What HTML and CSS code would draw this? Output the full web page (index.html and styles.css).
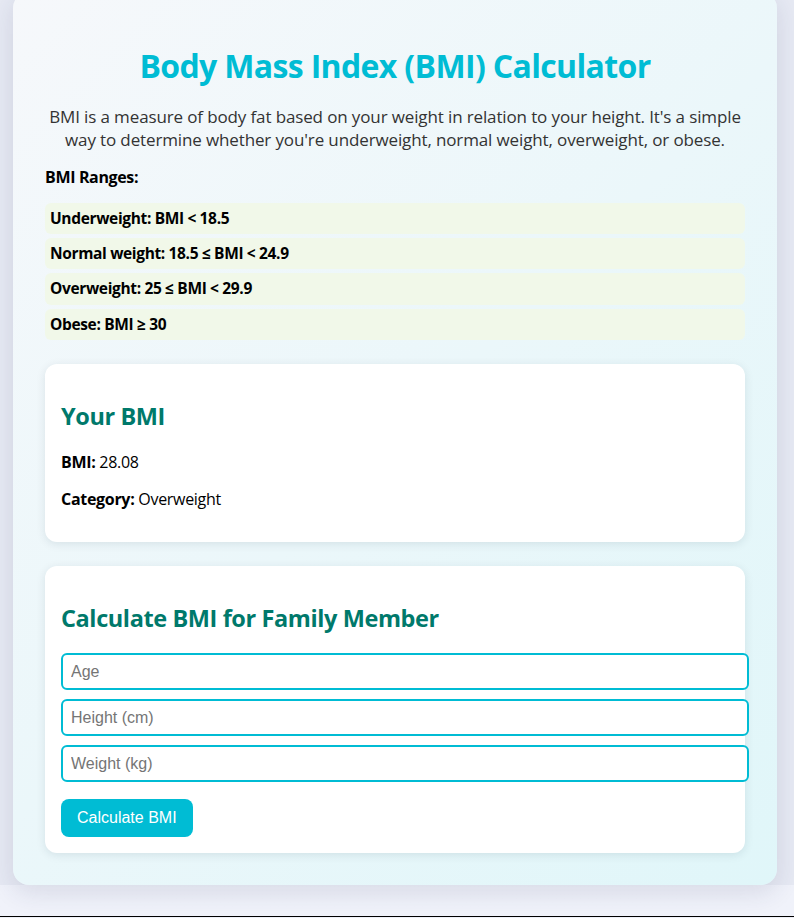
FILE: index.html
```html
<!DOCTYPE html>
<html lang="en">
<head>
<meta charset="utf-8">
<title>BMI Calculator</title>
<link rel="stylesheet" href="styles.css">
</head>
<body>
<div class="page">
  <div class="container">
    <h1 class="title">Body Mass Index (BMI) Calculator</h1>
    <p class="intro">BMI is a measure of body fat based on your weight in relation to your height. It's a simple way to determine whether you're underweight, normal weight, overweight, or obese.</p>
    <p class="ranges-label">BMI Ranges:</p>
    <ul class="ranges">
      <li>Underweight: BMI &lt; 18.5</li>
      <li>Normal weight: 18.5 ≤ BMI &lt; 24.9</li>
      <li>Overweight: 25 ≤ BMI &lt; 29.9</li>
      <li>Obese: BMI ≥ 30</li>
    </ul>
    <div class="card">
      <h2 class="card-title">Your BMI</h2>
      <p class="card-line"><strong>BMI:</strong> 28.08</p>
      <p class="card-line"><strong>Category:</strong> Overweight</p>
    </div>
    <div class="card card-form">
      <h2 class="card-title">Calculate BMI for Family Member</h2>
      <input class="field" type="number" placeholder="Age">
      <input class="field" type="number" placeholder="Height (cm)">
      <input class="field" type="number" placeholder="Weight (kg)">
      <button class="btn" type="button">Calculate BMI</button>
    </div>
  </div>
</div>
<div class="rule"></div>
</body>
</html>
```
FILE: styles.css
```css
html {
  background: #eef0f8;
}
body {
  margin: 0;
  font-family: "Open Sans", "Noto Sans", sans-serif;
  background: linear-gradient(180deg, #eef0f8 0%, #f0f2fa 100%);
  overflow: hidden;
}
.page {
  background: #e6e9f3;
  padding: 0 17px 0 13px;
}
.container {
  margin-top: -8px;
  padding: 32px;
  border-radius: 16px;
  background: linear-gradient(135deg, #f6f8fb 0%, #e0f6f9 100%);
  box-shadow: 0 8px 24px rgba(40, 50, 90, 0.12);
}
.title {
  margin: 20px 0 18px;
  font-size: 32px;
  line-height: 43px;
  font-weight: 700;
  letter-spacing: -0.65px;
  color: #00bcd4;
  text-align: center;
}
.intro {
  margin: 18px 0 15px;
  font-size: 17px;
  line-height: 23.4px;
  letter-spacing: -0.13px;
  color: #333;
  text-align: center;
}
.ranges-label {
  margin: 0 0 16px;
  font-size: 16px;
  line-height: 20px;
  font-weight: 700;
  letter-spacing: -0.35px;
  color: #000;
}
.ranges {
  list-style: none;
  margin: 0 0 23.5px;
  padding: 0;
}
.ranges li {
  margin: 0 0 4px;
  padding: 5px;
  font-size: 15.5px;
  line-height: 21.3px;
  font-weight: 700;
  letter-spacing: -0.35px;
  color: #000;
  background: #f1f8e9;
  border-radius: 6px;
}
.card {
  background: #fff;
  border-radius: 12px;
  padding: 16px;
  margin: 0 0 23.5px;
  box-shadow: 0 2px 10px rgba(0, 40, 60, 0.1);
}
.card-form {
  margin-bottom: 0;
  display: flex;
  flex-direction: column;
  align-items: flex-start;
}
.card-title {
  margin: 20px 0;
  font-size: 23.5px;
  line-height: 32px;
  font-weight: 700;
  letter-spacing: -0.4px;
  color: #00796b;
}
.card-form .card-title {
  margin-bottom: 19px;
}
.card-line {
  margin: 16px 0;
  font-size: 16px;
  line-height: 21.3px;
  letter-spacing: -0.3px;
  color: #000;
}
.field {
  box-sizing: content-box;
  width: 100%;
  margin: 0 0 9px;
  padding: 8px;
  border: 2px solid #00bcd4;
  border-radius: 6px;
  font-family: "Liberation Sans", Arial, sans-serif;
  font-size: 16px;
  line-height: 17px;
  height: 17px;
  color: #333;
  background: #fff;
  outline: none;
  -moz-appearance: textfield;
}
.field::-webkit-outer-spin-button,
.field::-webkit-inner-spin-button {
  -webkit-appearance: none;
  margin: 0;
}
.field::placeholder {
  color: #757575;
}
.btn {
  margin-top: 8px;
  padding: 10px 16px;
  border: none;
  border-radius: 8px;
  background: #00bcd4;
  color: #fff;
  font-family: "Liberation Sans", Arial, sans-serif;
  font-size: 16px;
  line-height: 18px;
  cursor: pointer;
}
.rule {
  margin-top: 31px;
  height: 1px;
  background: #000;
}
```
